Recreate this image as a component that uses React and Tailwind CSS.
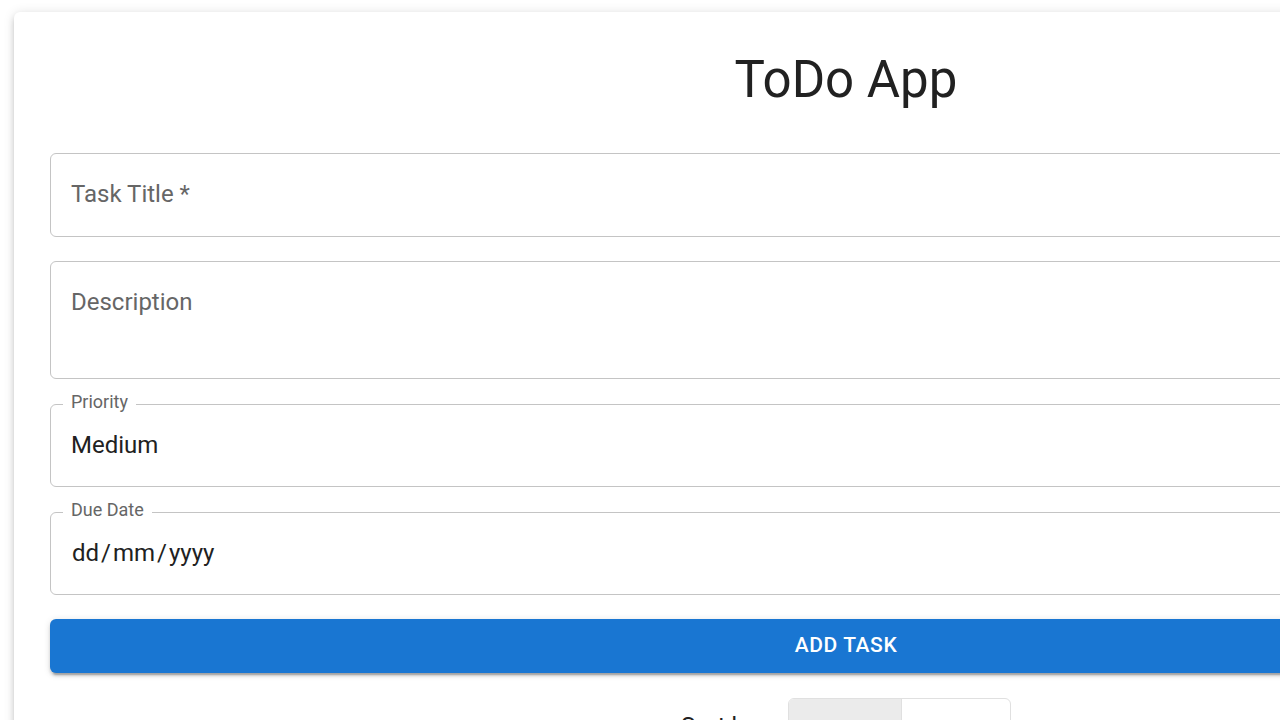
import React from "react";

function NotchedField({ label, children, height = "h-[83px]" }) {
  return (
    <div className={`relative ${height} rounded-[6px] border border-[#c4c4c4] px-[20px] pt-[23px]`}>
      <span className="absolute -top-[14px] left-[12px] bg-white px-[8px] text-[18px] leading-[22px] text-[#666666]">
        {label}
      </span>
      {children}
    </div>
  );
}

export default function App() {
  return (
    <div className="h-screen w-screen overflow-hidden bg-white font-['Roboto',sans-serif]">
      <div className="ml-[14px] mt-[12px] w-[1664px] rounded-[6px] bg-white p-[36px] shadow-[0_4.5px_4.5px_-3px_rgba(0,0,0,0.2),0_4.5px_6px_0_rgba(0,0,0,0.14),0_1.5px_12px_0_rgba(0,0,0,0.12)]">
        <h1 className="text-center text-[51px] font-normal leading-[63px] text-[#212121]">ToDo App</h1>

        <div className="mt-[42px] flex flex-col">
          <div className="h-[84px] rounded-[6px] border border-[#c4c4c4] px-[20px] pt-[23px]">
            <span className="text-[24px] leading-[34.5px] text-[#666666]">Task Title *</span>
          </div>

          <div className="mt-[24px] h-[118px] rounded-[6px] border border-[#c4c4c4] px-[20px] pt-[23px]">
            <span className="text-[24px] leading-[34.5px] text-[#666666]">Description</span>
          </div>

          <div className="mt-[25px]">
            <NotchedField label="Priority">
              <span className="text-[24px] leading-[34.5px] text-[#212121]">Medium</span>
            </NotchedField>
          </div>

          <div className="mt-[25px]">
            <NotchedField label="Due Date">
              <span className="flex pl-[1px] text-[24px] leading-[34.5px] text-[#212121]">
                <span>dd</span>
                <span className="mx-[2px]">/</span>
                <span>mm</span>
                <span className="mx-[2px]">/</span>
                <span>yyyy</span>
              </span>
            </NotchedField>
          </div>

          <button className="mt-[24px] flex h-[54px] items-center justify-center rounded-[6px] bg-[#1976d2] text-[21px] font-medium tracking-[0.6px] text-white shadow-[0_4.5px_1.5px_-3px_rgba(0,0,0,0.2),0_3px_3px_0_rgba(0,0,0,0.14),0_1.5px_7.5px_0_rgba(0,0,0,0.12)]">
            ADD TASK
          </button>

          <div className="mt-[25px] flex items-start justify-center gap-[26px]">
            <span className="mt-[10px] text-[24px] leading-[36px] text-[#212121]">Sort by:</span>
            <div className="flex h-[96px] w-[223px] overflow-hidden rounded-[6px] border border-[#e0e0e0]">
              <div className="flex w-[113px] items-center justify-center border-r border-[#e0e0e0] bg-[#ebebeb] text-[20px] font-medium text-[#212121]">
                DATE
              </div>
              <div className="flex flex-1 items-center justify-center text-[20px] font-medium text-[#666666]">
                PRIORITY
              </div>
            </div>
          </div>
        </div>
      </div>
    </div>
  );
}
